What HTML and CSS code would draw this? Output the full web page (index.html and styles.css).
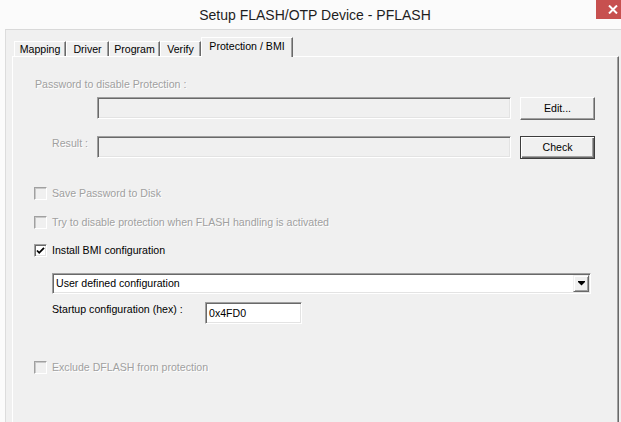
FILE: index.html
```html
<!DOCTYPE html>
<html>
<head>
<meta charset="utf-8">
<link rel="stylesheet" href="styles.css">
</head>
<body>
<div class="window">
  <div class="titlebar">
    <div class="title">Setup FLASH/OTP Device - PFLASH</div>
    <div class="close">
      <svg width="10" height="9" viewBox="0 0 10 9"><path d="M1 0.5L9 8.5M9 0.5L1 8.5" stroke="#fff" stroke-width="2"/></svg>
    </div>
  </div>
  <div class="client">
    <div class="tabs">
      <div class="tab t-map">Mapping</div>
      <div class="tab t-drv">Driver</div>
      <div class="tab t-prg">Program</div>
      <div class="tab t-ver">Verify</div>
      <div class="tab active">Protection / BMI</div>
    </div>
    <div class="panel">
      <div class="plabel dis">Password to disable Protection :</div>
      <div class="row r1">
        <span class="lab"></span>
        <div class="field"></div>
        <div class="btn">Edit...</div>
      </div>
      <div class="row r2">
        <span class="lab dis">Result :</span>
        <div class="field"></div>
        <div class="btn default">Check</div>
      </div>
      <div class="check c1 dis"><span class="box"></span>Save Password to Disk</div>
      <div class="check c2 dis"><span class="box"></span>Try to disable protection when FLASH handling is activated</div>
      <div class="check c3"><span class="box on">
        <svg width="9" height="9" viewBox="0 0 9 9"><path d="M1 4.5L3.2 6.8L8 1.8" fill="none" stroke="#000" stroke-width="1.8"/></svg>
      </span>Install BMI configuration</div>
      <div class="combo">
        <span class="combo-text">User defined configuration</span>
        <span class="drop">
          <svg width="7" height="5" viewBox="0 0 7 5"><rect x="0" y="0" width="7" height="1" fill="#000"/><polygon points="0,1 7,1 3.5,4.5" fill="#000"/></svg>
        </span>
      </div>
      <div class="startup">
        <span class="slab">Startup configuration (hex) :</span>
        <div class="hex">0x4FD0</div>
      </div>
      <div class="check c4 dis"><span class="box"></span>Exclude DFLASH from protection</div>
    </div>
  </div>
</div>
</body>
</html>
```

FILE: styles.css
```css
html, body {
  margin: 0;
  padding: 0;
}
body {
  width: 621px;
  height: 422px;
  overflow: hidden;
  background: #fbfbfb;
  font-family: "Liberation Sans", Arial, sans-serif;
  font-size: 10.6px;
  color: #000;
}
.window {
  display: flex;
  flex-direction: column;
  height: 422px;
}
.titlebar {
  height: 29px;
  display: flex;
  align-items: flex-start;
  background: #fbfbfb;
}
.title {
  flex: 1;
  text-align: center;
  padding-left: 34px;
  font-size: 14px;
  line-height: 30px;
  color: #1e1e1e;
}
.close {
  width: 46px;
  height: 19px;
  margin-right: -21px;
  background: #c7504f;
  display: flex;
  align-items: center;
  justify-content: flex-start;
  padding-left: 12px;
  box-sizing: border-box;
}
.client {
  flex: 1;
  margin-left: 5px;
  border-top: 1px solid #d9d9d9;
  border-left: 1px solid #dcdcdc;
  background: #f0f0f0;
  display: flex;
  flex-direction: column;
  padding-top: 7px;
  padding-left: 6px;
}
.tabs {
  display: flex;
  align-items: flex-end;
  padding-left: 2px;
  height: 20px;
  margin-bottom: -1px;
}
.tab {
  box-sizing: border-box;
  height: 16px;
  line-height: 13px;
  padding-top: 1px;
  text-align: center;
  background: #f0f0f0;
  border-top: 1px solid #fff;
  border-left: 1px solid #fff;
  border-right: 1px solid #696969;
  box-shadow: inset -1px 0 0 #a0a0a0;
}
.t-map { width: 52px; }
.t-drv { width: 43px; }
.t-prg { width: 51px; }
.t-ver { width: 41px; }
.tab.active {
  width: 92px;
  height: 20px;
  padding-top: 2px;
  position: relative;
  z-index: 1;
}
.panel {
  width: 607px;
  flex: 1;
  box-sizing: border-box;
  border-top: 1px solid #fff;
  border-left: 1px solid #fff;
  border-right: 1px solid #696969;
  box-shadow: inset -1px 0 0 #a0a0a0;
  padding-left: 21px;
  padding-top: 21px;
  display: flex;
  flex-direction: column;
  align-items: flex-start;
}
.dis {
  color: #a0a0a0;
  text-shadow: 1px 1px 0 #fff;
}
.plabel {
  line-height: 13px;
  margin-left: 1px;
}
.row {
  display: flex;
  align-items: flex-start;
}
.r1 { margin-top: 6px; }
.r2 { margin-top: 16px; }
.lab {
  width: 63px;
  box-sizing: border-box;
  padding-right: 9px;
  text-align: right;
  line-height: 13px;
  padding-top: 1px;
}
.field {
  width: 414px;
  height: 22px;
  box-sizing: border-box;
  border: 1px solid;
  border-color: #a0a0a0 #fff #fff #a0a0a0;
  box-shadow: inset 1px 1px 0 #696969, inset -1px -1px 0 #e3e3e3;
  background: #f0f0f0;
}
.btn {
  margin-left: 9px;
  width: 75px;
  height: 23px;
  box-sizing: border-box;
  border: 1px solid;
  border-color: #fff #696969 #696969 #fff;
  box-shadow: inset -1px -1px 0 #a0a0a0;
  background: #f0f0f0;
  text-align: center;
  line-height: 20px;
}
.btn.default {
  border: 1px solid #3c3c3c;
  box-shadow: inset 1px 1px 0 #fff, inset -1px -1px 0 #696969, inset -2px -2px 0 #a0a0a0;
}
.check {
  display: flex;
  align-items: center;
  height: 13px;
  line-height: 13px;
}
.c1 { margin-top: 28px; }
.c2 { margin-top: 16px; }
.c3 { margin-top: 15px; }
.c4 { margin-top: 37px; }
.box {
  width: 13px;
  height: 13px;
  box-sizing: border-box;
  margin-right: 5px;
  border: 1px solid;
  border-color: #a0a0a0 #fff #fff #a0a0a0;
  box-shadow: inset 1px 1px 0 #c8c8c8;
  background: #f0f0f0;
  display: flex;
  align-items: center;
  justify-content: center;
}
.box.on {
  background: #fff;
  border-color: #a0a0a0 #fff #fff #a0a0a0;
  box-shadow: inset 1px 1px 0 #696969, inset -1px -1px 0 #e3e3e3;
}
.combo {
  margin-top: 16px;
  margin-left: 18px;
  width: 539px;
  height: 21px;
  box-sizing: border-box;
  border: 1px solid;
  border-color: #a0a0a0 #fff #fff #a0a0a0;
  box-shadow: inset 1px 1px 0 #696969, inset -1px -1px 0 #e3e3e3;
  background: #fff;
  padding: 1px;
  display: flex;
  align-items: center;
}
.combo-text {
  flex: 1;
  padding-left: 2px;
  line-height: 13px;
}
.drop {
  width: 16px;
  height: 17px;
  box-sizing: border-box;
  border: 1px solid;
  border-color: #f0f0f0 #696969 #696969 #f0f0f0;
  box-shadow: inset 1px 1px 0 #fff, inset -1px -1px 0 #a0a0a0;
  background: #f0f0f0;
  display: flex;
  align-items: center;
  justify-content: center;
}
.startup {
  margin-top: 8px;
  margin-left: 18px;
  display: flex;
  align-items: flex-start;
}
.slab {
  width: 153px;
  line-height: 13px;
  padding-top: 1px;
}
.hex {
  width: 97px;
  height: 22px;
  box-sizing: border-box;
  border: 1px solid;
  border-color: #a0a0a0 #fff #fff #a0a0a0;
  box-shadow: inset 1px 1px 0 #696969, inset -1px -1px 0 #e3e3e3;
  background: #fff;
  padding-left: 3px;
  line-height: 20px;
}
```
